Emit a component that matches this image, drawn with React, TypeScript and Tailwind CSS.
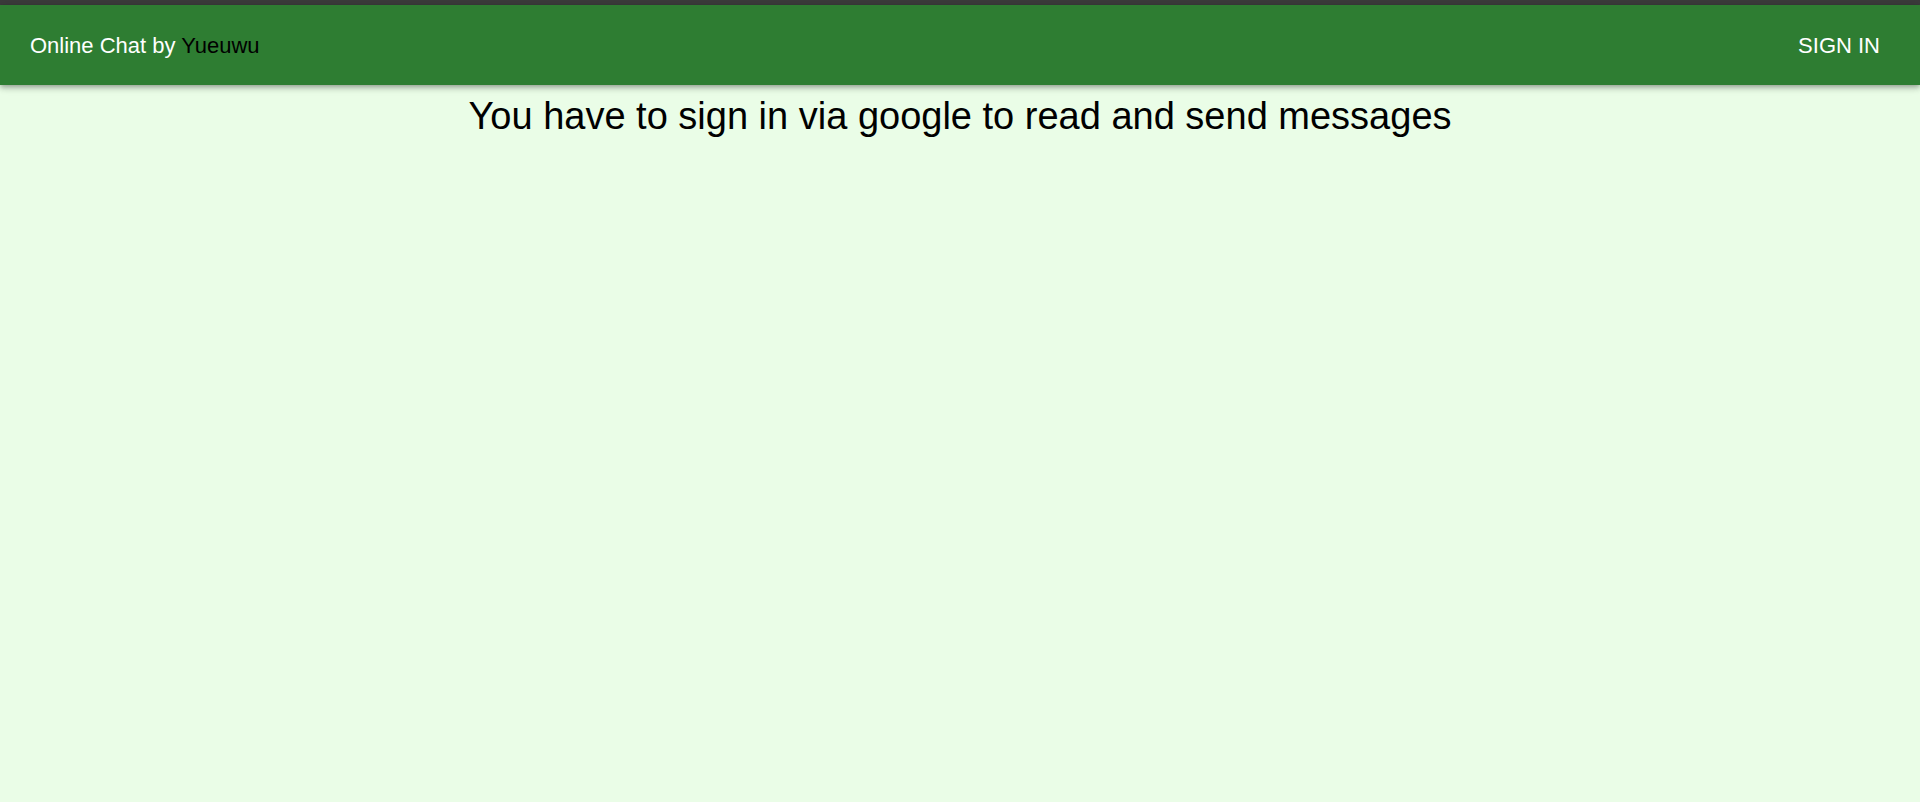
const App = () => {
  return (
    <div className="min-h-[802px] bg-[#eafde7] font-['Liberation_Sans',Arial,sans-serif]">
      <div className="h-[5px] bg-[#3b3b3b]" />
      {/* App bar */}
      <header className="flex h-[80px] items-center justify-between bg-[#2e7d32] px-[30px] shadow-[0_2px_4px_-1px_rgba(0,0,0,0.2),0_4px_5px_0_rgba(0,0,0,0.14),0_1px_10px_0_rgba(0,0,0,0.12)]">
        <h6 className="text-[22px] text-white">
          Online Chat by <span className="text-black">Yueuwu</span>
        </h6>
        <button className="mr-[10px] text-[22px] uppercase text-white">Sign in</button>
      </header>

      <main className="flex justify-center pt-[8px]">
        <h4 className="text-[38px] leading-[1.235] text-black">
          You have to sign in via google to read and send messages
        </h4>
      </main>
    </div>
  );
};

export default App;
